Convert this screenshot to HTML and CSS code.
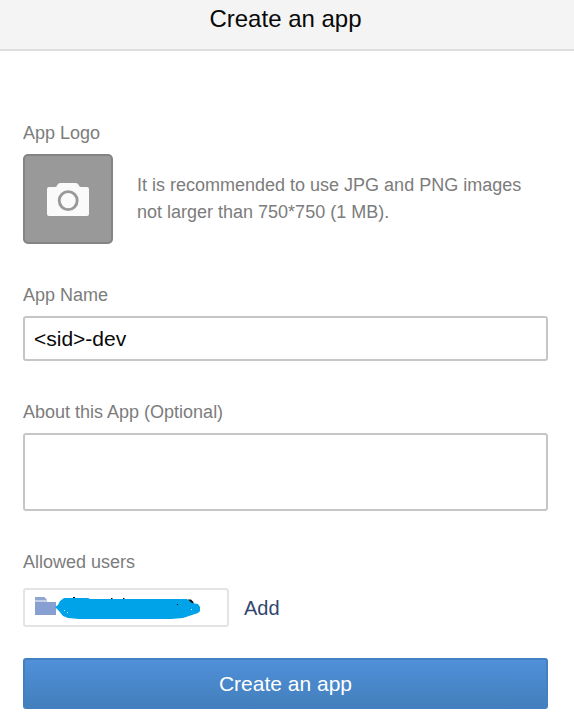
FILE: index.html
```html
<!DOCTYPE html>
<html lang="en">
<head>
<meta charset="utf-8">
<title>Create an app</title>
<link rel="stylesheet" href="styles.css">
</head>
<body>
<header class="header"><h1 class="title">Create an app</h1></header>
<form class="form">
  <section class="field field-logo">
    <div class="label">App Logo</div>
    <div class="logo-row">
      <div class="logo-box">
        <svg width="42" height="33" viewBox="0 0 42 33">
          <path fill="#fafafa" d="M2 4H8Q9.500 4 10 2.500Q11 0 13 0H29Q31 0 32 2.500Q32.500 4 34 4H40Q42 4 42 6V31Q42 33 40 33H2Q0 33 0 31V6Q0 4 2 4Z"/>
          <circle cx="21.200" cy="17.600" r="9" fill="none" stroke="#999" stroke-width="2.900"/>
        </svg>
      </div>
      <p class="hint">It is recommended to use JPG and PNG images<br>not larger than 750*750 (1 MB).</p>
    </div>
  </section>
  <section class="field field-name">
    <label class="label" for="name">App Name</label>
    <input class="input" id="name" type="text" value="&lt;sid&gt;-dev">
  </section>
  <section class="field field-about">
    <label class="label" for="about">About this App (Optional)</label>
    <textarea class="textarea" id="about"></textarea>
  </section>
  <section class="field field-users">
    <div class="label">Allowed users</div>
    <div class="users-row">
      <div class="user-box">
        <svg width="202" height="35" viewBox="0 0 202 35">
          <path fill="#88a0d1" d="M10 12H31V25H10Z"/>
          <path fill="#91a6cf" d="M10 7H19.500L22 10H10Z"/>
          <path fill="#c3cfe6" d="M10 10H22V12H10Z"/>
          <path fill="#111" d="M48 7h2v2h-2zM86 8h1.500v2h-1.500zM98 8h1.500v1.500h-1.500zM163 9.500H166L168.500 12V14.500H165Z"/>
          <path fill="#00a2e8" d="M30 17L33 15L35 11L39 8H63L65 9H162L167 13L173 14L175 17V21L173 23L167 25L158 28L146 29H54L43 28L38 26L34 21Z"/>
          <path fill="#111" d="M152 14h1v1h-1z"/>
          <path fill="#d9f2ff" d="M39 20h1v1h-1zM42 22h1v1h-1zM166 19h1v1h-1z"/>
        </svg>
      </div>
      <a class="add">Add</a>
    </div>
  </section>
  <button class="submit" type="button">Create an app</button>
</form>
</body>
</html>
```
FILE: styles.css
```css
* { box-sizing: border-box; }

body {
  margin: 0;
  background: #fff;
  color: #7c7c7c;
  font-family: "Liberation Sans", Arial, sans-serif;
  font-size: 18px;
}

.header {
  height: 51px;
  padding-top: 5px;
  background: #f4f4f4;
  border-bottom: 2px solid #dedede;
  text-align: center;
}

.title {
  margin: 0;
  padding-right: 3px;
  color: #080808;
  font-size: 24px;
  font-weight: 400;
  line-height: 28px;
}

.form {
  display: flex;
  flex-direction: column;
  padding: 72px 26px 0 23px;
}

.field { display: flex; flex-direction: column; }

.label { line-height: 20px; }

.logo-row {
  display: flex;
  align-items: center;
  gap: 24px;
  margin-top: 11px;
}

.logo-box {
  display: flex;
  align-items: center;
  justify-content: center;
  width: 90px;
  height: 90px;
  border: 2px solid #848484;
  border-radius: 5px;
  background: #999;
}

.hint { margin: 0; line-height: 27px; white-space: nowrap; }

.field-name { margin-top: 41px; }

.input,
.textarea {
  width: 100%;
  border: 2px solid #c6c6c6;
  border-radius: 3px;
  background: #fff;
  color: #080808;
  font-family: inherit;
  font-size: 21px;
  outline: none;
}

.input { height: 45px; margin-top: 11px; padding: 0 9px; }

.field-about { margin-top: 41px; }

.textarea { height: 78px; margin-top: 11px; padding: 9px; resize: none; }

.field-users { margin-top: 41px; }

.users-row {
  display: flex;
  align-items: center;
  gap: 15px;
  margin-top: 16px;
}

.user-box {
  display: flex;
  width: 206px;
  height: 39px;
  border: 2px solid #e4e4e4;
  border-radius: 3px;
}

.add { padding-top: 2px; color: #32476f; font-size: 20px; }

.submit {
  height: 51px;
  margin-top: 31px;
  padding: 0;
  border: 2px solid #4280bf;
  border-radius: 3px;
  background: linear-gradient(#5090d9, #437fbc);
  color: #fff;
  font-family: inherit;
  font-size: 21px;
}
```
